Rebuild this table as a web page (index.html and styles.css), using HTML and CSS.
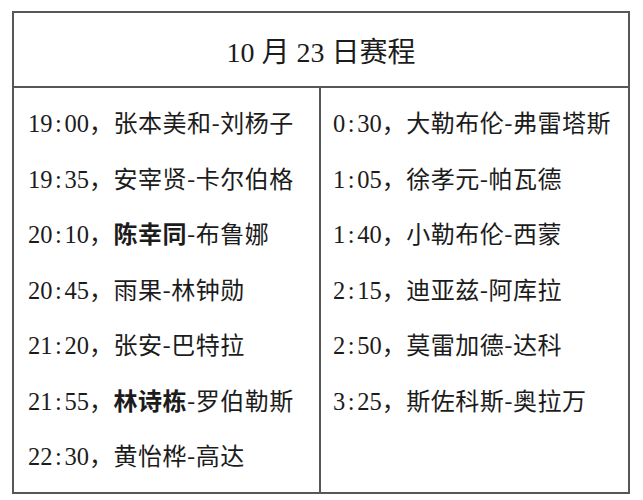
FILE: index.html
```html
<!DOCTYPE html>
<html lang="zh-CN">
<head>
<meta charset="utf-8">
<title>10月23日赛程</title>
<link rel="stylesheet" href="styles.css">
</head>
<body>
<div class="sheet">
  <div class="title">10 月 23 日赛程</div>
  <div class="cols">
    <div class="col col-left">
      <div class="row"><span class="t">19<span class="c">:</span>00</span>，张本美和-刘杨子</div>
      <div class="row"><span class="t">19<span class="c">:</span>35</span>，安宰贤-卡尔伯格</div>
      <div class="row"><span class="t">20<span class="c">:</span>10</span>，<b>陈幸同</b>-布鲁娜</div>
      <div class="row"><span class="t">20<span class="c">:</span>45</span>，雨果-林钟勋</div>
      <div class="row"><span class="t">21<span class="c">:</span>20</span>，张安-巴特拉</div>
      <div class="row"><span class="t">21<span class="c">:</span>55</span>，<b>林诗栋</b>-罗伯勒斯</div>
      <div class="row"><span class="t">22<span class="c">:</span>30</span>，黄怡桦-高达</div>
    </div>
    <div class="col col-right">
      <div class="row"><span class="t">0<span class="c">:</span>30</span>，大勒布伦-弗雷塔斯</div>
      <div class="row"><span class="t">1<span class="c">:</span>05</span>，徐孝元-帕瓦德</div>
      <div class="row"><span class="t">1<span class="c">:</span>40</span>，小勒布伦-西蒙</div>
      <div class="row"><span class="t">2<span class="c">:</span>15</span>，迪亚兹-阿库拉</div>
      <div class="row"><span class="t">2<span class="c">:</span>50</span>，莫雷加德-达科</div>
      <div class="row"><span class="t">3<span class="c">:</span>25</span>，斯佐科斯-奥拉万</div>
    </div>
  </div>
</div>
</body>
</html>
```

FILE: styles.css
```css
html, body {
  margin: 0;
  padding: 0;
  background: #ffffff;
}
body {
  padding: 11px 0 0 12px;
  font-family: "Liberation Serif", "Noto Sans CJK SC", serif;
  color: #1c1c1c;
}
.sheet {
  width: 614px;
  border: 2px solid #575757;
  box-sizing: content-box;
}
.title {
  border-bottom: 2px solid #575757;
  display: flex;
  align-items: center;
  justify-content: center;
  font-size: 28px;
  box-sizing: border-box;
  height: 75px;
}
.cols {
  display: grid;
  grid-template-columns: 307px 307px;
  height: 404px;
}
.col {
  padding: 6px 0 0 14px;
  font-family: "Noto Sans CJK SC", sans-serif;
  font-size: 24px;
  letter-spacing: 0.5px;
}
.col-left {
  border-right: 2px solid #575757;
}
.col-right {
  padding-left: 12px;
}
.row {
  height: 55.5px;
  line-height: 55.5px;
  white-space: nowrap;
}
.row b {
  font-weight: 700;
}
.t {
  font-family: "Liberation Serif", serif;
  font-size: 24.5px;
  letter-spacing: 0;
}
.c {
  display: inline-block;
  width: 12px;
  text-align: center;
}
```
